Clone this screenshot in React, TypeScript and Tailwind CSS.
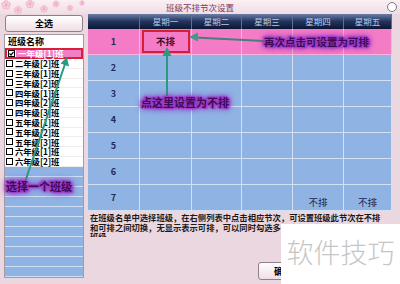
import React from 'react';

// Class list on the left
const classes = [
    '一年级[1]班',
    '二年级[2]班',
    '三年级[1]班',
    '三年级[2]班',
    '四年级[1]班',
    '四年级[2]班',
    '四年级[3]班',
    '五年级[1]班',
    '五年级[2]班',
    '五年级[3]班',
    '六年级[1]班',
    '六年级[2]班'
];

const days = ['星期一', '星期二', '星期三', '星期四', '星期五'];

// which cells are marked 不排: [row, col]
const marked: Record<string, boolean> = {
    '0-0': true,
    '6-3': true,
    '6-4': true
};

const colWidths = ['w-[52px]', 'w-[52px]', 'w-[50px]', 'w-[51px]', 'w-[51px]', 'w-[48px]'];

const glow =
    'text-[#3e0a56] font-bold [text-shadow:1px_0_0_#a23ccc,-1px_0_0_#a23ccc,0_1px_0_#a23ccc,0_-1px_0_#a23ccc,2px_1px_2px_#9a34c4,-2px_-1px_2px_#9a34c4,0_0_4px_#8e2cba,0_0_6px_#8e2cba,0_0_8px_#9a3cc8]';

const Flower = ({ x, y, r }: { x: number; y: number; r: number }) => (
    <g>
        {[0, 72, 144, 216, 288].map((a) => (
            <circle
                key={a}
                cx={x + Math.cos(((a - 90) * Math.PI) / 180) * r}
                cy={y + Math.sin(((a - 90) * Math.PI) / 180) * r}
                r={r * 0.75}
                fill="#f7d0dd"
                stroke="#e9a9c0"
                strokeWidth="0.6"
            />
        ))}
        <circle cx={x} cy={y} r={r * 0.4} fill="#eeaac2" />
    </g>
);

const Blossoms = () => (
    <svg className="absolute left-0 top-0" width="90" height="16">
        <Flower x={6} y={5} r={2.6} />
        <Flower x={18} y={10} r={2.2} />
        <Flower x={30} y={4} r={2.4} />
        <Flower x={44} y={9} r={2} />
        <Flower x={56} y={4} r={1.8} />
        <Flower x={70} y={8} r={1.6} />
        <Flower x={82} y={3} r={1.4} />
    </svg>
);

const Checkbox = ({ checked }: { checked?: boolean }) => (
    <span className="w-[7px] h-[7px] border border-black bg-white flex items-center justify-center shrink-0">
        {checked && (
            <svg width="5" height="5" viewBox="0 0 5 5">
                <path d="M0.5 2.5 L2 4 L4.5 0.8" stroke="black" strokeWidth="1.2" fill="none" />
            </svg>
        )}
    </span>
);

export default function App() {
    return (
        <div className="relative w-[400px] h-[284px] overflow-hidden bg-[#ead7df] font-['Noto_Sans_CJK_SC',sans-serif] text-black">
            {/* Title bar */}
            <div className="relative h-[14px] flex items-center justify-center bg-linear-to-b from-[#fbf0f4] to-[#f0dde5]">
                <Blossoms />
                <span className="text-[8.5px] leading-none text-[#7a3a5e]">班级不排节次设置</span>
                <span className="absolute right-[3px] top-[2px] w-[10px] h-[10px] rounded-full border border-[#7a7a7a] bg-white" />
            </div>

            <div className="flex pl-[4px] gap-[4px]">
                {/* Left column */}
                <div className="w-[80px] flex flex-col">
                    <button className="mt-[1px] mx-[1px] h-[17px] rounded-[3px] border border-[#8f7f86] bg-linear-to-b from-white to-[#efdee5] text-[9px] font-bold leading-none flex items-center justify-center">
                        全选
                    </button>
                    <div className="mt-[2px] h-[244px] border border-[#a898a0] bg-white flex flex-col overflow-hidden">
                        <div className="h-[13px] shrink-0 pl-[3px] text-[9px] font-bold leading-[13px]">班级名称</div>
                        {classes.map((c, i) =>
                            i === 0 ? (
                                <div
                                    key={c}
                                    className="h-[11px] shrink-0 flex items-center border-2 border-[#d8203c] bg-white"
                                >
                                    <span className="pl-[1px] pr-[1px]">
                                        <Checkbox checked />
                                    </span>
                                    <span className="flex-1 h-full bg-[#f27ec6] text-white text-[8.5px] font-bold leading-[7px] pl-[2px] flex items-center whitespace-nowrap">
                                        {c}
                                    </span>
                                </div>
                            ) : (
                                <div
                                    key={c}
                                    className="h-[9.8px] shrink-0 flex items-center gap-[2px] pl-[1px] border-b border-[#eeeeee]"
                                >
                                    <Checkbox />
                                    <span className="text-[8.3px] font-bold leading-[8.5px] whitespace-nowrap">{c}</span>
                                </div>
                            )
                        )}
                        <div className="flex-1 bg-[#8fb4e4] flex flex-col">
                            {Array.from({ length: 11 }).map((_, i) => (
                                <div key={i} className="h-[10px] shrink-0 border-b border-[#cfe0f6]" />
                            ))}
                        </div>
                    </div>
                </div>

                {/* Right column */}
                <div className="w-[304px] flex flex-col">
                    <div className="flex flex-col">
                        <div className="flex h-[15px]">
                            {['', ...days].map((d, i) => (
                                <div
                                    key={i}
                                    className={`${colWidths[i]} h-full bg-linear-to-b from-[#6b7fa8] via-[#22345e] to-[#0b1634] border-r border-[#5d6f96] flex items-center justify-center text-[8.5px] leading-none text-[#bccbea]`}
                                >
                                    {d}
                                </div>
                            ))}
                        </div>
                        {Array.from({ length: 7 }).map((_, r) => (
                            <div key={r} className={`flex h-[26px] ${r === 0 ? 'bg-[#f47cc6]' : 'bg-[#8fb4e4]'}`}>
                                {Array.from({ length: 6 }).map((_, c) => (
                                    <div
                                        key={c}
                                        className={`${colWidths[c]} h-full flex items-center justify-center border-r border-b ${
                                            r === 0 ? 'border-[#f7b4dc]' : 'border-[#d3e1f4]'
                                        }`}
                                    >
                                        {c === 0 ? (
                                            <span className="text-[9px] font-bold text-[#1c2b5c]">{r + 1}</span>
                                        ) : marked[`${r}-${c - 1}`] ? (
                                            r === 0 ? (
                                                <span className="w-[48px] h-[23px] border-2 border-[#d41e3a] flex items-center justify-center text-[9.5px] font-bold text-[#3a1030]">
                                                    不排
                                                </span>
                                            ) : (
                                                <span className="text-[9.5px] text-[#1a2656] mt-[10px]">不排</span>
                                            )
                                        ) : null}
                                    </div>
                                ))}
                            </div>
                        ))}
                    </div>

                    {/* Description */}
                    <div className="mt-[2px] h-[24px] overflow-hidden pl-[2px] text-[8.3px] font-bold leading-[9.5px] text-[#1a1a1a] whitespace-nowrap">
                        <div>在班级名单中选择班级，在右侧列表中点击相应节次，可设置班级此节次在不排</div>
                        <div>和可排之间切换，无显示表示可排，可以同时勾选多个班级进行设置。</div>
                        <div>班级</div>
                    </div>

                    <div className="mt-[25px] pl-[170px] flex">
                        <button className="w-[50px] h-[18px] rounded-[3px] border border-[#8f7f86] bg-linear-to-b from-white to-[#efdee5] text-[9px] font-bold leading-none flex items-center justify-center">
                            确定
                        </button>
                    </div>
                </div>
            </div>

            {/* Annotation arrows */}
            <svg className="absolute left-0 top-0 pointer-events-none" width="400" height="284">
                <line x1="264" y1="41" x2="195" y2="37.5" stroke="#4d7d78" strokeWidth="2" />
                <polygon points="189,37 198,32.5 198,41.5" fill="#3f9a86" />
                <line x1="167" y1="100" x2="167" y2="54" stroke="#2a9a82" strokeWidth="2" />
                <polygon points="167,47 162.5,56 171.5,56" fill="#2a9a82" />
                <line x1="25" y1="182" x2="65" y2="64" stroke="#2a9a82" strokeWidth="2" />
                <polygon points="67,57 69,66.5 60.5,63.6" fill="#2a9a82" />
            </svg>

            {/* Annotation labels */}
            <div className={`absolute left-[264px] top-[37px] text-[10.5px] leading-none whitespace-nowrap ${glow}`}>
                再次点击可设置为可排
            </div>
            <div className={`absolute left-[141px] top-[97px] text-[11px] leading-none whitespace-nowrap ${glow}`}>
                点这里设置为不排
            </div>
            <div className={`absolute left-[6px] top-[181px] text-[11px] leading-none whitespace-nowrap ${glow}`}>
                选择一个班级
            </div>

            {/* Watermark */}
            <div className="absolute left-[281px] top-[224px] w-[119px] h-[60px] bg-white flex items-center justify-center">
                <span className="text-[27px] font-light leading-none text-[#c6c6c6] -mt-[6px]">软件技巧</span>
            </div>
        </div>
    );
}
